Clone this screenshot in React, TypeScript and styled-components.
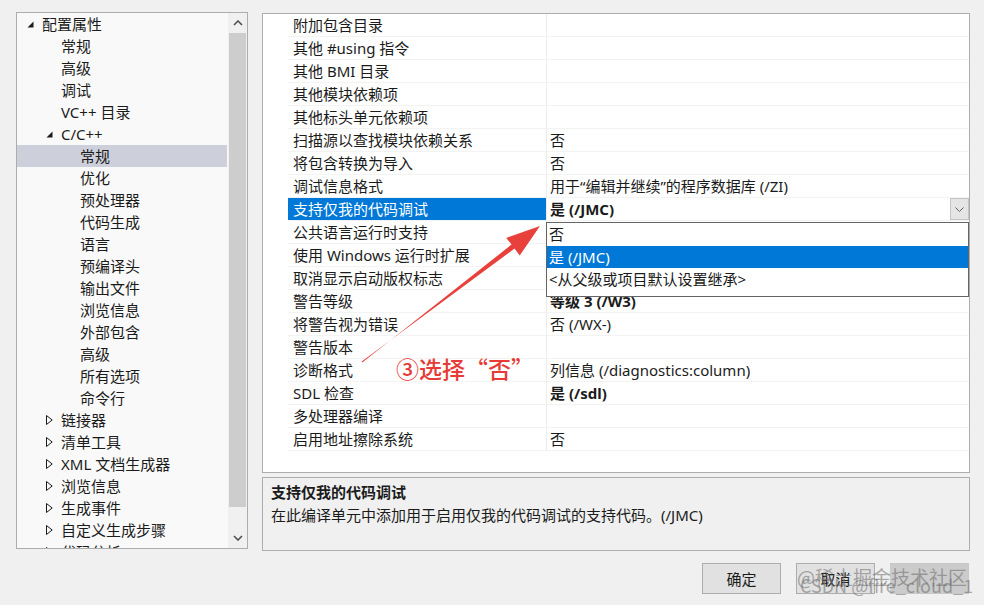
import React from "react";
import styled, { createGlobalStyle } from "styled-components";

const Global = createGlobalStyle`
  html, body { margin: 0; padding: 0; background: #f0f0f0; }
  body {
    font-family: "Noto Sans", "Noto Sans CJK SC", sans-serif;
    color: #1b1b1b;
    -webkit-font-smoothing: antialiased;
  }
`;

const Page = styled.div`
  position: relative;
  width: 984px;
  height: 605px;
  overflow: hidden;
  box-sizing: border-box;
  padding: 12px 0 0 16px;
  display: grid;
  grid-template-columns: 232px 708px;
  column-gap: 14px;
  align-items: start;
  font-size: 15px;
`;

/* ---------- Tree ---------- */
const TreePanel = styled.div`
  box-sizing: border-box;
  height: 537px;
  border: 1px solid #adadad;
  background: #f9f9f9;
  display: grid;
  grid-template-columns: 1fr 19px;
  overflow: hidden;
`;

const TreeList = styled.div`
  overflow: hidden;
`;

const TreeRow = styled.div<{ $level: number; $selected?: boolean }>`
  height: 22px;
  line-height: 22px;
  display: flex;
  align-items: center;
  padding-left: ${(p) => 6 + p.$level * 19}px;
  margin-right: 1px;
  background: ${(p) => (p.$selected ? "#cdd0da" : "transparent")};
  white-space: nowrap;
`;

const ArrowSlot = styled.span`
  width: 19px;
  height: 22px;
  flex: none;
  display: flex;
  align-items: center;
  padding-left: 4px;
  box-sizing: border-box;
`;

const Scrollbar = styled.div`
  display: flex;
  flex-direction: column;
  background: #f0f0f0;
`;

const ScrollBtn = styled.div`
  height: 20px;
  display: flex;
  align-items: center;
  justify-content: center;
  flex: none;
`;

const Track = styled.div`
  flex: 1;
  display: flex;
  justify-content: center;
`;

const Thumb = styled.div`
  width: 17px;
  height: 474px;
  background: #cdcdcd;
`;

/* ---------- Property grid ---------- */
const RightCol = styled.div`
  display: flex;
  flex-direction: column;
  padding-top: 1px;
`;

const GridPanel = styled.div`
  position: relative;
  box-sizing: border-box;
  height: 460px;
  border: 1px solid #adadad;
  background: #ffffff;
`;

const PropRow = styled.div`
  display: grid;
  grid-template-columns: 25px 259px 1fr;
  height: 23px;
`;

const Gutter = styled.div`
  background: #ffffff;
`;

const NameCell = styled.div<{ $selected?: boolean }>`
  box-sizing: border-box;
  padding-left: 5px;
  line-height: 22px;
  border-bottom: 1px solid #f3f3f3;
  border-right: 1px solid #ededed;
  background: ${(p) => (p.$selected ? "#0078d7" : "transparent")};
  color: ${(p) => (p.$selected ? "#ffffff" : "#1b1b1b")};
  white-space: nowrap;
`;

const ValueCell = styled.div<{ $bold?: boolean }>`
  box-sizing: border-box;
  padding-left: 3px;
  line-height: 22px;
  border-bottom: 1px solid #f3f3f3;
  font-weight: ${(p) => (p.$bold ? 700 : 400)};
  display: flex;
  justify-content: space-between;
  white-space: nowrap;
`;

const DropBtn = styled.div`
  box-sizing: border-box;
  width: 19px;
  height: 22px;
  background: #e5e5e5;
  border: 1px solid #c4c4c4;
  display: flex;
  align-items: center;
  justify-content: center;
`;

const DropList = styled.div`
  position: absolute;
  left: 283px;
  top: 208px;
  width: 423px;
  height: 75px;
  box-sizing: border-box;
  border: 1px solid #646464;
  background: #ffffff;
`;

const DropItem = styled.div<{ $selected?: boolean }>`
  height: 22.5px;
  line-height: 22px;
  padding-left: 2px;
  background: ${(p) => (p.$selected ? "#0078d7" : "transparent")};
  color: ${(p) => (p.$selected ? "#ffffff" : "#1b1b1b")};
  white-space: nowrap;
`;

/* ---------- Description ---------- */
const DescPanel = styled.div`
  box-sizing: border-box;
  margin-top: 4px;
  height: 74px;
  border: 1px solid #adadad;
  background: #f0f0f0;
  padding: 3px 8px;
`;

const DescTitle = styled.div`
  font-weight: 700;
  line-height: 23px;
`;

const DescText = styled.div`
  line-height: 23px;
`;

/* ---------- Buttons ---------- */
const ButtonRow = styled.div`
  margin-top: 12px;
  display: flex;
  justify-content: flex-end;
  gap: 15px;
  padding-right: 1px;
`;

const Button = styled.div<{ $muted?: boolean }>`
  box-sizing: border-box;
  width: 79px;
  height: 31px;
  border: 1px solid ${(p) => (p.$muted ? "#c8c8c8" : "#adadad")};
  background: ${(p) => (p.$muted ? "#cbcbcb" : "#e1e1e1")};
  display: flex;
  align-items: center;
  justify-content: center;
`;

/* ---------- Overlays ---------- */
const ArrowSvg = styled.svg`
  position: absolute;
  left: 355px;
  top: 220px;
  width: 190px;
  height: 150px;
  pointer-events: none;
`;

const Annotation = styled.div`
  position: absolute;
  left: 396px;
  top: 353px;
  font-size: 23px;
  line-height: 30px;
  color: #e63b36;
  font-weight: 500;
  font-family: "Noto Sans CJK SC", sans-serif;
  white-space: nowrap;
`;

const Watermark = styled.div<{ $size: number }>`
  position: absolute;
  font-size: ${(p) => p.$size}px;
  color: rgba(105, 105, 105, 0.55);
  font-family: "Noto Sans CJK SC", sans-serif;
  white-space: nowrap;
  pointer-events: none;
`;

/* ---------- Icons ---------- */
const OpenTri = () => (
  <svg width="7" height="7" viewBox="0 0 7 7">
    <polygon points="6.5,0.5 6.5,6.5 0.5,6.5" fill="#1b1b1b" />
  </svg>
);

const ClosedTri = () => (
  <svg width="7" height="10" viewBox="0 0 7 10">
    <polygon points="0.5,0.5 6.2,5 0.5,9.5" fill="none" stroke="#1b1b1b" strokeWidth="1" />
  </svg>
);

const Chevron = ({ up }: { up?: boolean }) => (
  <svg width="10" height="6" viewBox="0 0 10 6">
    <polyline
      points={up ? "1,5 5,1 9,5" : "1,1 5,5 9,1"}
      fill="none"
      stroke="#505050"
      strokeWidth="1.6"
    />
  </svg>
);

const SmallChevron = () => (
  <svg width="9" height="5" viewBox="0 0 9 5">
    <polyline points="0.5,0.5 4.5,4.5 8.5,0.5" fill="none" stroke="#606060" strokeWidth="1" />
  </svg>
);

type TreeItem = { label: string; level: number; arrow?: "open" | "closed"; selected?: boolean };

const tree: TreeItem[] = [
  { label: "配置属性", level: 0, arrow: "open" },
  { label: "常规", level: 1 },
  { label: "高级", level: 1 },
  { label: "调试", level: 1 },
  { label: "VC++ 目录", level: 1 },
  { label: "C/C++", level: 1, arrow: "open" },
  { label: "常规", level: 2, selected: true },
  { label: "优化", level: 2 },
  { label: "预处理器", level: 2 },
  { label: "代码生成", level: 2 },
  { label: "语言", level: 2 },
  { label: "预编译头", level: 2 },
  { label: "输出文件", level: 2 },
  { label: "浏览信息", level: 2 },
  { label: "外部包含", level: 2 },
  { label: "高级", level: 2 },
  { label: "所有选项", level: 2 },
  { label: "命令行", level: 2 },
  { label: "链接器", level: 1, arrow: "closed" },
  { label: "清单工具", level: 1, arrow: "closed" },
  { label: "XML 文档生成器", level: 1, arrow: "closed" },
  { label: "浏览信息", level: 1, arrow: "closed" },
  { label: "生成事件", level: 1, arrow: "closed" },
  { label: "自定义生成步骤", level: 1, arrow: "closed" },
  { label: "代码分析", level: 1, arrow: "closed" },
];

type Prop = { name: string; value: string; bold?: boolean; selected?: boolean };

const props: Prop[] = [
  { name: "附加包含目录", value: "" },
  { name: "其他 #using 指令", value: "" },
  { name: "其他 BMI 目录", value: "" },
  { name: "其他模块依赖项", value: "" },
  { name: "其他标头单元依赖项", value: "" },
  { name: "扫描源以查找模块依赖关系", value: "否" },
  { name: "将包含转换为导入", value: "否" },
  { name: "调试信息格式", value: "用于“编辑并继续”的程序数据库 (/ZI)" },
  { name: "支持仅我的代码调试", value: "是 (/JMC)", bold: true, selected: true },
  { name: "公共语言运行时支持", value: "" },
  { name: "使用 Windows 运行时扩展", value: "" },
  { name: "取消显示启动版权标志", value: "" },
  { name: "警告等级", value: "等级 3 (/W3)", bold: true },
  { name: "将警告视为错误", value: "否 (/WX-)" },
  { name: "警告版本", value: "" },
  { name: "诊断格式", value: "列信息 (/diagnostics:column)" },
  { name: "SDL 检查", value: "是 (/sdl)", bold: true },
  { name: "多处理器编译", value: "" },
  { name: "启用地址擦除系统", value: "否" },
];

export default function App() {
  return (
    <>
      <Global />
      <Page>
        <TreePanel>
          <TreeList>
            {tree.map((t, i) => (
              <TreeRow key={i} $level={t.level} $selected={t.selected}>
                <ArrowSlot>
                  {t.arrow === "open" && <OpenTri />}
                  {t.arrow === "closed" && <ClosedTri />}
                </ArrowSlot>
                {t.label}
              </TreeRow>
            ))}
          </TreeList>
          <Scrollbar>
            <ScrollBtn>
              <Chevron up />
            </ScrollBtn>
            <Track>
              <Thumb />
            </Track>
            <ScrollBtn>
              <Chevron />
            </ScrollBtn>
          </Scrollbar>
        </TreePanel>

        <RightCol>
          <GridPanel>
            {props.map((p, i) => (
              <PropRow key={i}>
                <Gutter />
                <NameCell $selected={p.selected}>{p.name}</NameCell>
                <ValueCell $bold={p.bold}>
                  <span>{p.value}</span>
                  {p.selected && (
                    <DropBtn>
                      <SmallChevron />
                    </DropBtn>
                  )}
                </ValueCell>
              </PropRow>
            ))}
            <DropList>
              <DropItem>否</DropItem>
              <DropItem $selected>是 (/JMC)</DropItem>
              <DropItem>&lt;从父级或项目默认设置继承&gt;</DropItem>
            </DropList>
          </GridPanel>

          <DescPanel>
            <DescTitle>支持仅我的代码调试</DescTitle>
            <DescText>在此编译单元中添加用于启用仅我的代码调试的支持代码。(/JMC)</DescText>
          </DescPanel>

          <ButtonRow>
            <Button>确定</Button>
            <Button>取消</Button>
            <Button $muted />
          </ButtonRow>
        </RightCol>

        <ArrowSvg viewBox="0 0 190 150">
          <polygon
            points="7.3,142.4 156.5,24.6 151.3,17.9 185,6 164.7,35.4 159.5,28.6 6.7,141.6"
            fill="#e8413c"
          />
        </ArrowSvg>
        <Annotation>③选择“否”</Annotation>

        <Watermark $size={19} style={{ left: 797, top: 563 }}>@稀土掘金技术社区</Watermark>
        <Watermark $size={18} style={{ left: 800, top: 572 }}>CSDN @fire_cloud_1</Watermark>
      </Page>
    </>
  );
}
